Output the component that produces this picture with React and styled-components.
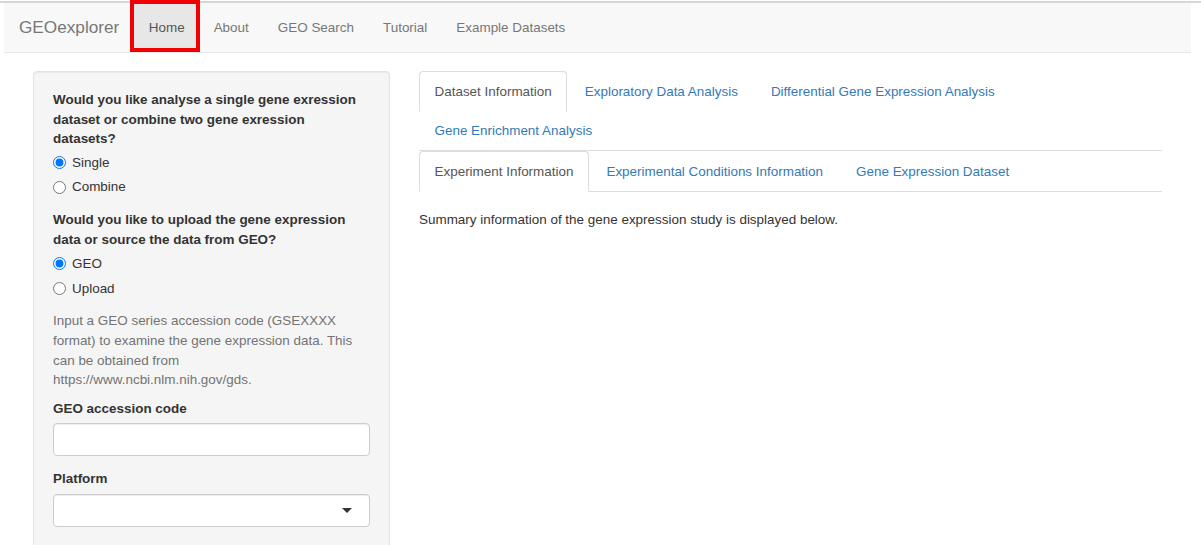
import React from "react";
import styled, { createGlobalStyle } from "styled-components";

const Global = createGlobalStyle`
  html, body { margin: 0; padding: 0; background: #fff; }
  body {
    font-family: "Liberation Sans", Arial, Helvetica, sans-serif;
    font-size: 13.45px;
    line-height: 19.6px;
    color: #333;
    overflow: hidden;
  }
  * { box-sizing: border-box; }
`;

const TopRule = styled.div`
  margin-top: 1px;
  height: 2px;
  background: #d6d6d6;
`;

const Navbar = styled.nav`
  display: flex;
  align-items: stretch;
  height: 50px;
  margin: 0 10px 18px 4px;
  background: #f8f8f8;
  border-bottom: 1px solid #e7e7e7;
`;

const Brand = styled.div`
  display: flex;
  align-items: center;
  padding: 0 15px;
  font-size: 17.2px;
  color: #777;
`;

const NavList = styled.ul`
  display: flex;
  list-style: none;
  margin: 0;
  padding: 0;
`;

const NavItem = styled.li`
  position: relative;
  display: flex;
  align-items: center;
  padding: 0 14.5px;
  color: ${(p) => (p.$active ? "#555" : "#777")};
  background: ${(p) => (p.$active ? "#e7e7e7" : "transparent")};
  ${(p) =>
    p.$highlight &&
    `
    &::after {
      content: "";
      position: absolute;
      left: -4px;
      right: -1px;
      top: -3px;
      bottom: 0;
      border: 4px solid #f00000;
    }
  `}
`;

const Layout = styled.main`
  display: grid;
  grid-template-columns: 357px 743px;
  column-gap: 29px;
  padding-left: 33px;
  align-items: start;
`;

const Well = styled.section`
  display: flex;
  flex-direction: column;
  padding: 18px 19px 40px;
  background: #f5f5f5;
  border: 1px solid #e3e3e3;
  border-radius: 4px;
  box-shadow: inset 0 1px 1px rgba(0, 0, 0, 0.05);
`;

const FormGroup = styled.div`
  display: flex;
  flex-direction: column;
  margin-bottom: ${(p) => p.$mb ?? 13}px;
`;

const Label = styled.label`
  font-weight: 700;
  color: #333;
  margin-bottom: ${(p) => p.$mb ?? 4}px;
`;

const RadioList = styled.div`
  display: flex;
  flex-direction: column;
  gap: 5px;
`;

const RadioRow = styled.label`
  display: flex;
  align-items: center;
  gap: 6px;
  color: #333;
  input {
    margin: 0;
    width: 13px;
    height: 13px;
  }
`;

const Help = styled.p`
  margin: 0 0 9px;
  color: #737373;
`;

const TextInput = styled.input`
  height: 33px;
  width: 100%;
  border: 1px solid #ccc;
  border-radius: 4px;
  background: #fff;
  box-shadow: inset 0 1px 1px rgba(0, 0, 0, 0.075);
  padding: 6px 12px;
  font: inherit;
`;

const SelectBox = styled.div`
  display: flex;
  align-items: center;
  justify-content: flex-end;
  height: 33px;
  padding-right: 17px;
  border: 1px solid #ccc;
  border-radius: 4px;
  background: #fff;
  box-shadow: inset 0 1px 1px rgba(0, 0, 0, 0.075);
`;

const Main = styled.section`
  display: flex;
  flex-direction: column;
`;

const Tabs = styled.ul`
  display: flex;
  flex-wrap: wrap;
  list-style: none;
  margin: 0;
  padding: 0;
  border-bottom: 1px solid #ddd;
`;

const Tab = styled.li`
  margin: 0 2px -1px 0;
  padding: 9.5px 14.5px;
  border: 1px solid ${(p) => (p.$active ? "#ddd" : "transparent")};
  border-bottom-color: transparent;
  border-radius: 4px 4px 0 0;
  background: ${(p) => (p.$active ? "#fff" : "transparent")};
  color: ${(p) => (p.$active ? "#555" : "#337ab7")};
  white-space: nowrap;
`;

const Summary = styled.p`
  margin: 18px 0 0;
  color: #333;
`;

const Caret = () => (
  <svg width="10" height="5" viewBox="0 0 10 5" aria-hidden="true">
    <polygon points="0,0 10,0 5,5" fill="#333" />
  </svg>
);

export default function App() {
  return (
    <>
      <Global />
      <TopRule />
      <Navbar>
        <Brand>GEOexplorer</Brand>
        <NavList>
          <NavItem $active $highlight>Home</NavItem>
          <NavItem>About</NavItem>
          <NavItem>GEO Search</NavItem>
          <NavItem>Tutorial</NavItem>
          <NavItem>Example Datasets</NavItem>
        </NavList>
      </Navbar>
      <Layout>
        <Well>
          <FormGroup>
            <Label>
              Would you like analyse a single gene exression dataset or combine
              two gene exression datasets?
            </Label>
            <RadioList>
              <RadioRow>
                <input type="radio" name="mode" defaultChecked />
                Single
              </RadioRow>
              <RadioRow>
                <input type="radio" name="mode" />
                Combine
              </RadioRow>
            </RadioList>
          </FormGroup>
          <FormGroup>
            <Label $mb={5}>
              Would you like to upload the gene expression data or source the
              data from GEO?
            </Label>
            <RadioList>
              <RadioRow>
                <input type="radio" name="src" defaultChecked />
                GEO
              </RadioRow>
              <RadioRow>
                <input type="radio" name="src" />
                Upload
              </RadioRow>
            </RadioList>
          </FormGroup>
          <Help>
            Input a GEO series accession code (GSEXXXX format) to examine the
            gene expression data. This can be obtained from
            https://www.ncbi.nlm.nih.gov/gds.
          </Help>
          <FormGroup>
            <Label $mb={5}>GEO accession code</Label>
            <TextInput type="text" />
          </FormGroup>
          <FormGroup $mb={0}>
            <Label $mb={5}>Platform</Label>
            <SelectBox>
              <Caret />
            </SelectBox>
          </FormGroup>
        </Well>
        <Main>
          <Tabs>
            <Tab $active>Dataset Information</Tab>
            <Tab>Exploratory Data Analysis</Tab>
            <Tab>Differential Gene Expression Analysis</Tab>
            <Tab>Gene Enrichment Analysis</Tab>
          </Tabs>
          <Tabs>
            <Tab $active>Experiment Information</Tab>
            <Tab>Experimental Conditions Information</Tab>
            <Tab>Gene Expression Dataset</Tab>
          </Tabs>
          <Summary>
            Summary information of the gene expression study is displayed below.
          </Summary>
        </Main>
      </Layout>
    </>
  );
}
